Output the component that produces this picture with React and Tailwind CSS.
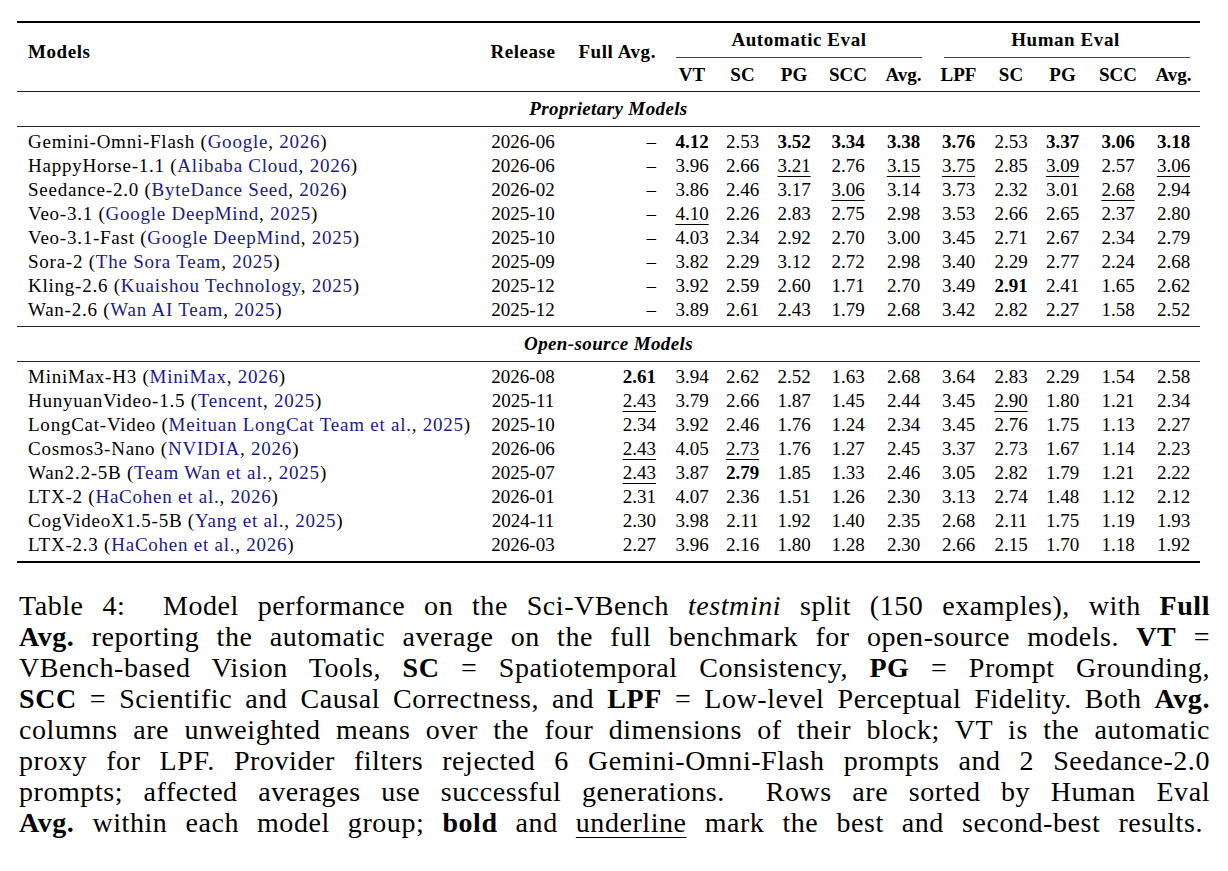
import React from "react";

const COLS =
  "grid grid-cols-[463px_86px_101px_50px_51px_52px_56px_55px_55px_50px_53px_58px_53px]";

const proprietary = [
  ["Gemini-Omni-Flash", "Google, 2026", "2026-06", "–", "*4.12", "2.53", "*3.52", "*3.34", "*3.38", "*3.76", "2.53", "*3.37", "*3.06", "*3.18"],
  ["HappyHorse-1.1", "Alibaba Cloud, 2026", "2026-06", "–", "3.96", "2.66", "_3.21", "2.76", "_3.15", "_3.75", "2.85", "_3.09", "2.57", "_3.06"],
  ["Seedance-2.0", "ByteDance Seed, 2026", "2026-02", "–", "3.86", "2.46", "3.17", "_3.06", "3.14", "3.73", "2.32", "3.01", "_2.68", "2.94"],
  ["Veo-3.1", "Google DeepMind, 2025", "2025-10", "–", "_4.10", "2.26", "2.83", "2.75", "2.98", "3.53", "2.66", "2.65", "2.37", "2.80"],
  ["Veo-3.1-Fast", "Google DeepMind, 2025", "2025-10", "–", "4.03", "2.34", "2.92", "2.70", "3.00", "3.45", "2.71", "2.67", "2.34", "2.79"],
  ["Sora-2", "The Sora Team, 2025", "2025-09", "–", "3.82", "2.29", "3.12", "2.72", "2.98", "3.40", "2.29", "2.77", "2.24", "2.68"],
  ["Kling-2.6", "Kuaishou Technology, 2025", "2025-12", "–", "3.92", "2.59", "2.60", "1.71", "2.70", "3.49", "*2.91", "2.41", "1.65", "2.62"],
  ["Wan-2.6", "Wan AI Team, 2025", "2025-12", "–", "3.89", "2.61", "2.43", "1.79", "2.68", "3.42", "2.82", "2.27", "1.58", "2.52"],
];

const openSource = [
  ["MiniMax-H3", "MiniMax, 2026", "2026-08", "*2.61", "3.94", "2.62", "2.52", "1.63", "2.68", "3.64", "2.83", "2.29", "1.54", "2.58"],
  ["HunyuanVideo-1.5", "Tencent, 2025", "2025-11", "_2.43", "3.79", "2.66", "1.87", "1.45", "2.44", "3.45", "_2.90", "1.80", "1.21", "2.34"],
  ["LongCat-Video", "Meituan LongCat Team et al., 2025", "2025-10", "2.34", "3.92", "2.46", "1.76", "1.24", "2.34", "3.45", "2.76", "1.75", "1.13", "2.27"],
  ["Cosmos3-Nano", "NVIDIA, 2026", "2026-06", "_2.43", "4.05", "_2.73", "1.76", "1.27", "2.45", "3.37", "2.73", "1.67", "1.14", "2.23"],
  ["Wan2.2-5B", "Team Wan et al., 2025", "2025-07", "_2.43", "3.87", "*2.79", "1.85", "1.33", "2.46", "3.05", "2.82", "1.79", "1.21", "2.22"],
  ["LTX-2", "HaCohen et al., 2026", "2026-01", "2.31", "4.07", "2.36", "1.51", "1.26", "2.30", "3.13", "2.74", "1.48", "1.12", "2.12"],
  ["CogVideoX1.5-5B", "Yang et al., 2025", "2024-11", "2.30", "3.98", "2.11", "1.92", "1.40", "2.35", "2.68", "2.11", "1.75", "1.19", "1.93"],
  ["LTX-2.3", "HaCohen et al., 2026", "2026-03", "2.27", "3.96", "2.16", "1.80", "1.28", "2.30", "2.66", "2.15", "1.70", "1.18", "1.92"],
];

function Val({ v }) {
  if (v.startsWith("*")) return <span className="font-bold">{v.slice(1)}</span>;
  if (v.startsWith("_"))
    return <span className="underline decoration-1 underline-offset-[4px]">{v.slice(1)}</span>;
  return <span>{v}</span>;
}

function Cite({ text }) {
  const i = text.lastIndexOf(", ");
  return (
    <>
      (<span className="text-[#1a1a8e]">{text.slice(0, i)}</span>,{" "}
      <span className="text-[#1a1a8e]">{text.slice(i + 2)}</span>)
    </>
  );
}

function Row({ r }) {
  const [name, cite, release, full, ...scores] = r;
  return (
    <div className={`${COLS} h-[24px] items-center`}>
      <div className="pl-[11px] whitespace-nowrap tracking-[0.04em]">
        {name} <Cite text={cite} />
      </div>
      <div className="text-center">{release}</div>
      <div className="text-right pr-[11px]">
        <Val v={full} />
      </div>
      {scores.map((s, i) => (
        <div key={i} className="text-center">
          <Val v={s} />
        </div>
      ))}
    </div>
  );
}

function Group({ title, rows }) {
  return (
    <>
      <div className="h-[34px] flex items-center justify-center font-bold italic tracking-[0.02em]">{title}</div>
      <div className="h-px bg-[#222]" />
      <div className="pt-[3px] pb-[4px]">
        {rows.map((r) => (
          <Row key={r[0]} r={r} />
        ))}
      </div>
    </>
  );
}

const B = ({ children }) => <b className="font-bold">{children}</b>;

const captionLines = [
  <>Table 4:&nbsp; Model performance on the Sci-VBench <i>testmini</i> split (150 examples), with <B>Full</B></>,
  <><B>Avg.</B> reporting the automatic average on the full benchmark for open-source models. <B>VT</B> =</>,
  <>VBench-based Vision Tools, <B>SC</B> = Spatiotemporal Consistency, <B>PG</B> = Prompt Grounding,</>,
  <><B>SCC</B> = Scientific and Causal Correctness, and <B>LPF</B> = Low-level Perceptual Fidelity. Both <B>Avg.</B></>,
  <>columns are unweighted means over the four dimensions of their block; VT is the automatic</>,
  <>proxy for LPF. Provider filters rejected 6 Gemini-Omni-Flash prompts and 2 Seedance-2.0</>,
  <>prompts; affected averages use successful generations.&nbsp; Rows are sorted by Human Eval</>,
  <><B>Avg.</B> within each model group; <B>bold</B> and <span className="underline decoration-1 underline-offset-[5px]">underline</span> mark the best and second-best results.</>,
];

export default function App() {
  return (
    <div className="w-[1228px] h-[871px] bg-white text-black font-['Liberation_Serif',serif] overflow-hidden">
      <div className="ml-[17px] pt-[21px] w-[1183px] text-[19px] leading-[24px]">
        <div className="h-[2px] bg-black" />
        {/* header */}
        <div className={`${COLS} grid-rows-[35px_33px] font-bold`}>
          <div className="row-span-2 flex items-center pl-[11px] pb-[10px] tracking-[0.03em]">Models</div>
          <div className="row-span-2 flex items-center justify-center pb-[10px] tracking-[0.03em]">Release</div>
          <div className="row-span-2 flex items-center justify-end pr-[11px] pb-[10px] tracking-[0.03em]">Full Avg.</div>
          <div className="col-span-5 flex flex-col justify-between pt-[5px]">
            <div className="text-center tracking-[0.03em]">Automatic Eval</div>
            <div className="h-px bg-[#444] ml-[9px] mr-[9px]" />
          </div>
          <div className="col-span-5 flex flex-col justify-between pt-[5px]">
            <div className="text-center tracking-[0.03em]">Human Eval</div>
            <div className="h-px bg-[#444] ml-[13px] mr-[10px]" />
          </div>
          {["VT", "SC", "PG", "SCC", "Avg.", "LPF", "SC", "PG", "SCC", "Avg."].map((h, i) => (
            <div key={i} className="flex items-center justify-center">
              {h}
            </div>
          ))}
        </div>
        <div className="h-px bg-[#222]" />
        <Group title="Proprietary Models" rows={proprietary} />
        <div className="h-px bg-[#222]" />
        <Group title="Open-source Models" rows={openSource} />
        <div className="h-[2px] bg-black" />
      </div>

      <div className="ml-[19px] mt-[27px] w-[1191px] text-[28px] leading-[31px] tracking-[0.02em]">
        {captionLines.map((l, i) => (
          <div
            key={i}
            className={`text-justify [text-align-last:justify] ${i === 7 ? "mr-[7px]" : ""}`}
          >
            {l}
          </div>
        ))}
      </div>
    </div>
  );
}
